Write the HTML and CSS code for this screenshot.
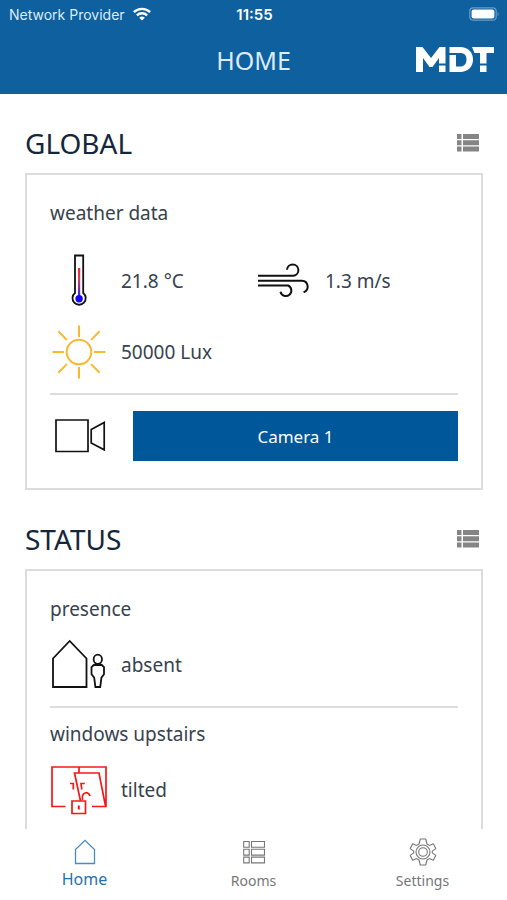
FILE: index.html
```html
<!DOCTYPE html>
<html lang="en">
<head>
<meta charset="utf-8">
<meta name="viewport" content="width=device-width, initial-scale=1">
<title>Home</title>
<link rel="stylesheet" href="styles.css">
</head>
<body>
<header class="top">
  <div class="status-bar">
    <span class="carrier">Network Provider
      <svg width="18" height="14" viewBox="0 0 18 14" fill="none" stroke="#fff" stroke-width="2.4" aria-hidden="true"><path d="M.9 5.2a11.6 11.6 0 0 1 16.2 0M3.900 8.300a7.300 7.300 0 0 1 10.200 0"/><path d="M9 13.600 6.200 10.800a4 4 0 0 1 5.600 0Z" fill="#fff" stroke="none"/></svg>
    </span>
    <span class="time">11:55</span>
    <svg class="battery" width="31" height="14" viewBox="0 0 31 14" aria-hidden="true"><rect x=".8" y=".8" width="26.4" height="12.4" rx="3.5" fill="none" stroke="#6b9cc6" stroke-width="1.2"/><rect x="2.6" y="2.6" width="22.8" height="8.8" rx="2" fill="#fff"/><path d="M28.6 4.7q2 2.3 0 4.6Z" fill="#6b9cc6"/></svg>
  </div>
  <div class="title-bar">
    <h1>HOME</h1>
    <svg class="logo" width="80" height="26" viewBox="0 0 80 26" role="img" aria-label="MDT"><g fill="#fff"><path d="M1 25V0h6.500l8.500 11L24.500 0h6v16.500H24V11l-6.500 9h-3L8 11v14Z"/><path d="M24 18.500h6.500V25H24Z"/><path d="M34.500 0H45c8 0 13 5 13 12.500S53 25 45 25H34.500V8h6.500v11.500h4c4 0 6.500-2.500 6.500-7s-2.500-6.500-6.500-6.500H34.500Z"/><path d="M57 0h22v6h-7.500v10.500H65V6h-5.500Z"/><path d="M65 18.500h6.500V25H65Z"/></g></svg>
  </div>
</header>

<main>
  <section>
    <div class="section-head">
      <h2>GLOBAL</h2>
      <button class="list-button" aria-label="Global list"><svg width="24" height="18" viewBox="0 0 24 18" fill="#858585"><path d="M1 0h4.500v5H1zM7 0h16v5H7zM1 6.300h4.500v5H1zM7 6.300h16v5H7zM1 12.600h4.500v5H1zM7 12.600h16v5H7z"/></svg></button>
    </div>
    <div class="card">
      <h3>weather data</h3>
      <div class="readings">
        <div class="row">
          <svg class="icon" viewBox="0 0 56 56" fill="none" aria-hidden="true"><defs><linearGradient id="mercury" x1="0" y1="0" x2="0" y2="1"><stop offset="0" stop-color="#ff2424"/><stop offset=".4" stop-color="#d84058"/><stop offset="1" stop-color="#3a20f0"/></linearGradient></defs><path d="M24 2.500h8.200V40a6.600 6.600 0 1 1-8.200 0Z" stroke="#111" stroke-width="1.800"/><path d="M27 15h2.200v28H27z" fill="url(#mercury)"/><circle cx="28.100" cy="45.800" r="3.700" fill="#1208f5"/></svg>
          <span>21.8 °C</span>
        </div>
        <div class="row">
          <svg class="icon" viewBox="0 0 56 56" fill="none" stroke="#111" stroke-width="2" aria-hidden="true"><path d="M3 22.800h35.500a5.700 5.700 0 1 0-6.500-6M3 27.700h44a5.900 5.900 0 0 1 1.600 11.500M3 32.500h30a5.500 5.500 0 1 1-7.500 6.300"/></svg>
          <span>1.3 m/s</span>
        </div>
        <div class="row">
          <svg class="icon" viewBox="0 0 56 56" fill="none" stroke="#f9b92f" stroke-width="2" aria-hidden="true"><circle cx="28" cy="28" r="12.300"/><path d="M28 1.500v11.500M28 43v11.500M1.500 28H13M43 28h11.500M7.300 7.300l8.600 8.600M40.100 40.100l8.600 8.600M48.700 7.300l-8.600 8.600M15.900 40.100l-8.600 8.600"/></svg>
          <span>50000 Lux</span>
        </div>
      </div>
      <hr>
      <div class="camera">
        <svg class="icon" viewBox="0 0 56 56" fill="none" stroke="#111" stroke-width="1.700" aria-hidden="true"><path d="M5 12h32v31.500H5zM40.200 21.500V35l13 6.800V14.500Z"/></svg>
        <button class="camera-button">Camera 1</button>
      </div>
    </div>
  </section>

  <section>
    <div class="section-head">
      <h2>STATUS</h2>
      <button class="list-button" aria-label="Status list"><svg width="24" height="18" viewBox="0 0 24 18" fill="#858585"><path d="M1 0h4.500v5H1zM7 0h16v5H7zM1 6.300h4.500v5H1zM7 6.300h16v5H7zM1 12.600h4.500v5H1zM7 12.600h16v5H7z"/></svg></button>
    </div>
    <div class="card">
      <h3>presence</h3>
      <div class="row">
        <svg class="icon" viewBox="1 0 56 56" fill="none" stroke="#111" stroke-width="1.800" aria-hidden="true"><path d="M3 50V21.500L19.700 4l16.800 17.500V50Z"/><ellipse cx="47.800" cy="22.300" rx="4.200" ry="4.700"/><path d="M43.800 28h8l2.200 2.200v7l-2.600 3.400-1.200 9.400h-4.800l-1.200-9.400-2.700-3.400v-7Z"/></svg>
        <span>absent</span>
      </div>
      <hr>
      <h3>windows upstairs</h3>
      <div class="row">
        <svg class="icon" viewBox="1 0 56 56" fill="none" stroke="#f51818" stroke-width="1.700" aria-hidden="true"><path d="M15.500 44.500H2V5h54v39.500H42M29 5v6M30.500 39 24.500 11H49l6.500 33"/><path d="M20 21.500h3.300v6M31.800 27.500l-.8-6h3.800"/><path d="M32.500 38c-1.500-8 6-9.500 7.500-4"/><path d="M22 39h13.500v12.500H22z"/><path d="M28.800 43.500v4" stroke-width="2"/></svg>
        <span>tilted</span>
      </div>
      <hr>
    </div>
  </section>
</main>

<nav class="tabs">
  <a class="tab active" href="#home"><svg width="28" height="28" viewBox="0 0 28 28" fill="none" stroke="#4c8bc0" stroke-width="1.300" aria-hidden="true"><path d="M4.500 25.500V11.500L14 2.300l9.500 9.200v14Z"/></svg><span>Home</span></a>
  <a class="tab" href="#rooms"><svg width="28" height="28" viewBox="0 0 28 28" fill="none" stroke="#777" stroke-width="1.100" aria-hidden="true"><path d="M3.700 3.500h5.500v5.800H3.700zM11.500 3.500h13v5.800h-13zM3.700 11.300h5.500v5.800H3.700zM11.500 11.300h13v5.800h-13zM3.700 19.100h5.500v5.800H3.700zM11.500 19.100h13v5.800h-13z"/></svg><span>Rooms</span></a>
  <a class="tab" href="#settings"><svg width="28" height="28" viewBox="0 0 28 28" fill="none" stroke="#777" stroke-width="1.100" stroke-linejoin="round" aria-hidden="true"><path d="M11.300 1h5.400l1.300 5 2.300 1.400 4-1.600 2.500 4.800-3.500 2.500v1.800l3.500 2.500-2.500 4.800-4-1.600-2.300 1.400-1.300 5h-5.400L10 22l-2.300-1.400-4 1.600-2.500-4.800 3.500-2.500v-1.800l-3.500-2.500 2.500-4.800 4 1.600L10 6Z"/><circle cx="14" cy="14" r="7"/><circle cx="14" cy="14" r="4.300"/></svg><span>Settings</span></a>
</nav>
</body>
</html>
```

FILE: styles.css
```css
* { box-sizing: border-box; }

body {
  display: flex;
  flex-direction: column;
  height: 100vh;
  margin: 0;
  overflow: hidden;
  background: #fff;
  color: #36424e;
  font-family: "Noto Sans", sans-serif;
  font-size: 19px;
}

h1, h2, h3 { margin: 0; font-weight: 400; }
svg { display: block; flex: none; }

button {
  border: 0;
  padding: 0;
  background: none;
  font: inherit;
}

.top {
  flex: none;
  background: #0e609e;
  color: #fff;
}

.status-bar,
.title-bar {
  display: grid;
  grid-template-columns: 1fr auto 1fr;
  align-items: center;
}

.status-bar {
  height: 28px;
  padding: 0 7px 0 9px;
  font-family: Inter, sans-serif;
  font-size: 14px;
}

.carrier {
  display: flex;
  align-items: center;
  gap: 8px;
  color: #dcecf8;
  white-space: nowrap;
}

.time {
  font-size: 15px;
  font-weight: 600;
}

.battery, .logo { justify-self: end; }

.title-bar {
  height: 66px;
  padding: 0 12px 2px;
}

.title-bar h1 {
  grid-column: 2;
  color: #dcecf8;
  font-size: 25px;
  line-height: 62px;
}

main {
  flex: 1;
  min-height: 0;
  overflow: hidden;
  padding: 0 24px 0 25px;
}

.section-head {
  display: flex;
  align-items: center;
  justify-content: space-between;
  height: 59px;
  margin-top: 20px;
  padding: 0 3px 2px 0;
}

h2 {
  color: #14273a;
  font-size: 28px;
}

.card {
  padding: 24px 23px 27px;
  border: 2px solid #dcdcdc;
}

h3 {
  font-size: 19px;
  line-height: 28px;
  margin-bottom: 6px;
}

.readings {
  display: grid;
  grid-template-columns: 1fr 1fr;
  margin-top: 18px;
}

.row {
  display: flex;
  align-items: center;
  gap: 14px;
  height: 71px;
}

.icon {
  width: 56px;
  height: 56px;
  margin-left: 1px;
}

hr {
  height: 2px;
  margin: 6px 0 12px;
  border: 0;
  background: #dcdcdc;
}

.camera {
  display: flex;
  align-items: center;
  gap: 26px;
  height: 50px;
  margin-top: 16px;
}

.camera-button {
  flex: 1;
  height: 50px;
  background: #00579a;
  color: #fff;
  font-size: 17px;
}

.tabs {
  display: grid;
  grid-template-columns: repeat(3, 1fr);
  flex: none;
  height: 71px;
  padding-top: 9px;
}

.tab {
  display: flex;
  flex-direction: column;
  align-items: center;
  gap: 4px;
  color: #777;
  font-size: 14px;
  line-height: 22px;
  text-decoration: none;
}

.active {
  gap: 2px;
  color: #2670af;
  font-size: 16px;
}
```
